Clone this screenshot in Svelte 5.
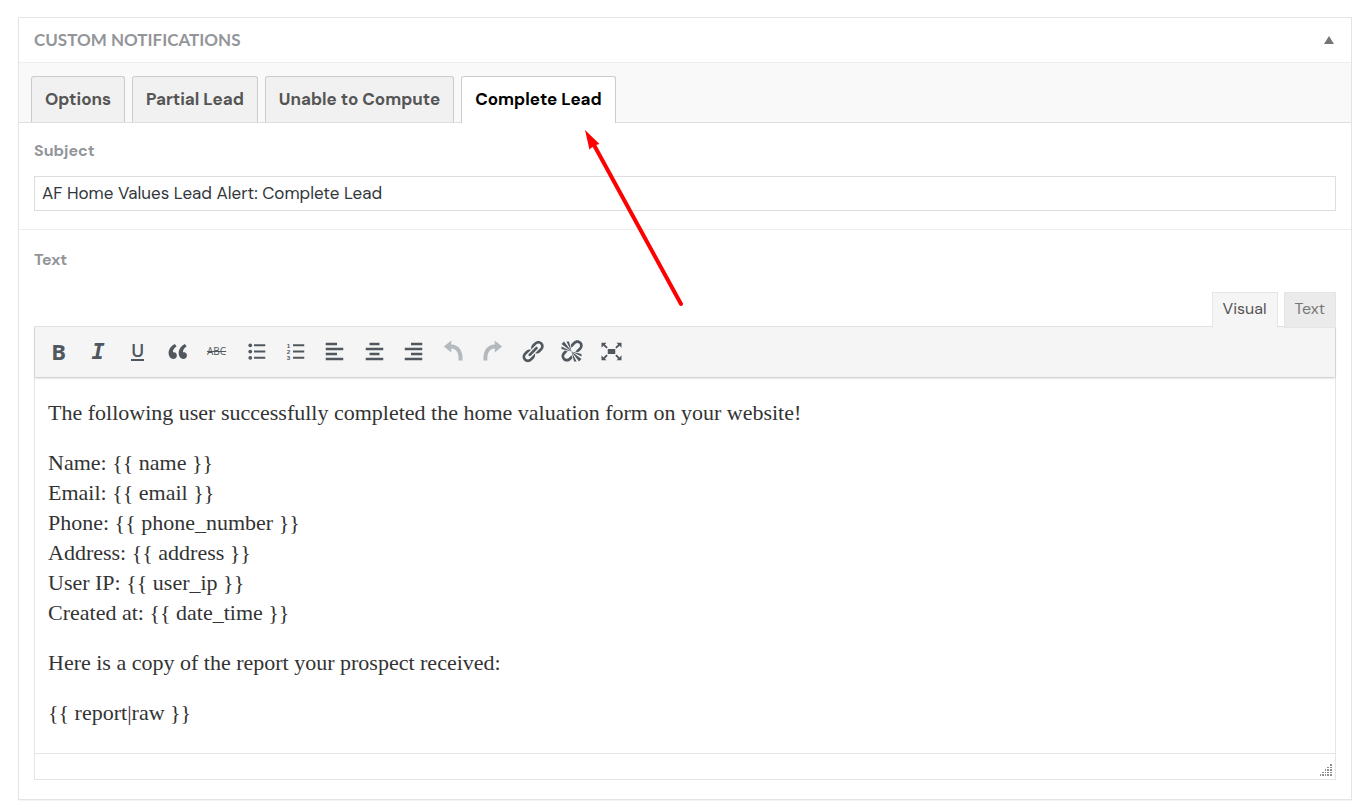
<script>
	const tabs = ['Options', 'Partial Lead', 'Unable to Compute', 'Complete Lead'];
	let activeTab = 'Complete Lead';
	let subject = 'AF Home Values Lead Alert: Complete Lead';
	let mode = 'Visual';
	let open = true;

	const paragraphs = [
		['The following user successfully completed the home valuation form on your website!'],
		[
			'Name: {{ name }}',
			'Email: {{ email }}',
			'Phone: {{ phone_number }}',
			'Address: {{ address }}',
			'User IP: {{ user_ip }}',
			'Created at: {{ date_time }}'
		],
		['Here is a copy of the report your prospect received:'],
		['{{ report|raw }}']
	];

	const icons = [
		{
			label: 'Align left',
			path: 'M3 3h9v2H3zM3 7h14v2H3zM3 11h9v2H3zM3 15h14v2H3z'
		},
		{
			label: 'Align center',
			path: 'M6 3h8v2H6zM3 7h14v2H3zM6 11h8v2H6zM3 15h14v2H3z'
		},
		{
			label: 'Align right',
			path: 'M8 3h9v2H8zM3 7h14v2H3zM8 11h9v2H8zM3 15h14v2H3z'
		},
		{
			label: 'Undo',
			disabled: true,
			path: 'M8.2 1.2v3.1c5.9.2 9.5 4.6 9 12.8l-3.2.1c.4-5.8-1.4-9.4-5.8-9.6v3.2L2.3 6z'
		},
		{
			label: 'Redo',
			disabled: true,
			path: 'M11.8 1.2v3.1c-5.9.2-9.5 4.6-9 12.8l3.2.1c-.4-5.8 1.4-9.4 5.8-9.6v3.2L17.7 6z'
		},
		{
			label: 'Insert link',
			path: 'M17.74 2.76c1.68 1.69 1.68 4.41 0 6.1l-1.53 1.52c-1.12 1.12-2.7 1.47-4.14 1.09l2.62-2.61.76-.77.76-.76c.84-.84.84-2.2 0-3.04-.84-.85-2.2-.85-3.04 0l-.77.76-3.38 3.38c-.37-1.44-.02-3.02 1.1-4.14l1.52-1.53c1.69-1.68 4.42-1.68 6.1 0zM8.59 13.43l5.34-5.34c.42-.42.42-1.1 0-1.52-.44-.43-1.13-.39-1.53 0l-5.33 5.34c-.42.42-.42 1.1 0 1.52.44.43 1.13.39 1.52 0zm-.76 2.29l4.14-4.15c.38 1.44.03 3.02-1.09 4.14l-1.52 1.53c-1.69 1.68-4.41 1.68-6.1 0-1.68-1.68-1.68-4.42 0-6.1l1.53-1.52c1.12-1.12 2.7-1.47 4.14-1.1l-4.14 4.15c-.85.84-.85 2.2 0 3.05.84.84 2.2.84 3.04 0z'
		},
		{
			label: 'Remove link',
			path: 'M17.74 2.26c1.68 1.69 1.68 4.41 0 6.1l-1.53 1.52c-.32.33-.69.58-1.08.77L13 10l1.69-1.64.76-.77.76-.76c.84-.84.84-2.2 0-3.04-.84-.85-2.2-.85-3.04 0l-.77.76-.76.76L10 7l-.65-2.14c.19-.38.44-.75.77-1.07l1.52-1.53c1.69-1.68 4.42-1.68 6.1 0zM2 4l8 6-6-8zm4-2l4 8-2-8H6zM2 6l8 4-8-2V6zm7.36 7.69L10 13l.74 2.35-1.38 1.39c-1.69 1.68-4.41 1.68-6.1 0-1.68-1.68-1.68-4.42 0-6.1l1.39-1.38L7 10l-.69.64-1.52 1.53c-.85.84-.85 2.2 0 3.04.84.85 2.2.85 3.04 0zM18 16l-8-6 6 8zm-4 2l-4-8 2 8h2zm4-4l-8-4 8 2v2z'
		},
		{
			label: 'Fullscreen',
			path: 'M7 8h6v4H7zM2 3h4L4.7 4.3 7 6.6 6 7.6 3.5 5.3 2 7zM18 3v4l-1.5-1.7L14 7.6l-1-1 2.3-2.3L14 3zM2 17v-4l1.5 1.7L6 12.4l1 1-2.3 2.3L6 17zM18 17h-4l1.3-1.3-2.3-2.3 1-1 2.5 2.3L18 13z'
		}
	];
</script>

<section class="panel">
	<header>
		<h2>Custom Notifications</h2>
		<button class="toggle" aria-label="Toggle panel" aria-expanded={open} on:click={() => (open = !open)}>
			<svg viewBox="0 0 10 8"><path d="M5 0l5 8H0z" /></svg>
		</button>
	</header>

	{#if open}
		<div class="tabs" role="tablist">
			{#each tabs as tab}
				<button role="tab" class="tab" class:active={tab === activeTab} aria-selected={tab === activeTab} on:click={() => (activeTab = tab)}>{tab}</button>
			{/each}
		</div>

		<div class="field">
			<label for="subject">Subject</label>
			<input id="subject" type="text" bind:value={subject} />
		</div>

		<div class="field text-field">
			<span class="label" id="text-label">Text</span>
			<div class="modes">
				{#each ['Visual', 'Text'] as name}
					<button class="mode" class:current={mode === name} on:click={() => (mode = name)}>{name}</button>
				{/each}
			</div>

			<div class="editor">
				<div class="toolbar">
					<div class="buttons">
						<button aria-label="Bold"><b>B</b></button>
						<button aria-label="Italic"><i>I</i></button>
						<button aria-label="Underline"><span class="underline">U</span></button>
						<button aria-label="Blockquote">
							<svg viewBox="0 0 20 20"><path d="M9.49 13.22c0-.74-.2-1.38-.61-1.9-.62-.78-1.83-.88-2.53-.72-.29-1.65 1.11-3.75 2.92-4.65L7.88 4c-2.73 1.3-5.42 4.28-4.96 8.05C3.21 14.43 4.59 16 6.54 16c.85 0 1.56-.25 2.12-.75s.83-1.18.83-2.03zm8.05 0c0-.74-.2-1.38-.61-1.9-.63-.78-1.83-.88-2.53-.72-.29-1.65 1.11-3.75 2.92-4.65L15.93 4c-2.73 1.3-5.41 4.28-4.95 8.05.29 2.38 1.66 3.95 3.61 3.95.85 0 1.56-.25 2.12-.75s.83-1.18.83-2.03z" /></svg>
						</button>
						<button aria-label="Strikethrough"><s>ABC</s></button>
						<button aria-label="Bulleted list">
							<svg viewBox="0 0 20 20">
								<circle cx="5" cy="5" r="1.5" /><circle cx="5" cy="10" r="1.5" /><circle cx="5" cy="15" r="1.5" />
								<path d="M8 4.2h9v1.6H8zM8 9.2h9v1.6H8zM8 14.2h9v1.6H8z" />
							</svg>
						</button>
						<button aria-label="Numbered list">
							<svg viewBox="0 0 20 20">
								<text x="3" y="7">1</text><text x="3" y="12">2</text><text x="3" y="17">3</text>
								<path d="M8 4.2h9v1.6H8zM8 9.2h9v1.6H8zM8 14.2h9v1.6H8z" />
							</svg>
						</button>
						{#each icons as icon}
							<button aria-label={icon.label} disabled={icon.disabled}>
								<svg viewBox="0 0 20 20"><path d={icon.path} /></svg>
							</button>
						{/each}
					</div>
				</div>

				<div class="content" contenteditable="true" role="textbox" aria-multiline="true" aria-labelledby="text-label" tabindex="0" spellcheck="false">
					{#each paragraphs as lines}
						<p>
							{#each lines as line, i}{#if i}<br />{/if}{line}{/each}
						</p>
					{/each}
				</div>

				<div class="statusbar">
					<svg viewBox="0 0 12 12">
						<path d="M10 0h2v2h-2zM7 3h2v1H7zM10 3h2v1h-2zM5 5h1v2H5zM7 5h2v2H7zM10 5h2v2h-2zM5 8h1v1H5zM7 8h2v1H7zM10 8h2v1h-2zM2 8h2v1H2zM0 10h1v2H0zM2 10h2v2H2zM5 10h1v2H5zM7 10h2v2H7zM10 10h2v2h-2z" />
					</svg>
				</div>
			</div>
		</div>

		<svg class="arrow" viewBox="0 0 100 178" aria-hidden="true">
			<path class="shaft" d="M96 174L9 15" />
			<path class="head" d="M0 0l14.5 14-3.5 1-5 3-1.500 1.800z" />
		</svg>
	{/if}
</section>

<style>
:global(body) {
	background: #fff;
}
* {
	box-sizing: border-box;
}
button,
input {
	font-family: inherit;
}
button {
	cursor: pointer;
}
.panel {
	position: relative;
	margin: 17px 16px 8px 18px;
	border: 1px solid #e2e4e7;
	box-shadow: 0 1px 1px rgba(0, 0, 0, 0.04);
	font-family: "DM Sans", Inter, "Open Sans", sans-serif;
	color: #32373c;
}
header {
	display: flex;
	align-items: center;
	justify-content: space-between;
	height: 45px;
	padding: 0 15px;
	border-bottom: 1px solid #eee;
}
h2 {
	margin: 0;
	font-family: Lato, sans-serif;
	font-size: 17px;
	font-weight: 700;
	line-height: 24px;
	text-transform: uppercase;
	color: #939599;
}
.toggle {
	display: flex;
	padding: 0;
	border: 0;
	background: none;
}
.toggle svg {
	width: 14px;
	height: 8px;
	fill: #72777c;
}
.tabs {
	display: flex;
	gap: 7px;
	padding: 13px 12px 0;
	border-bottom: 1px solid #dfdfdf;
	background: #f9f9f9;
}
.tab {
	height: 46px;
	padding: 0 13px 2px;
	border: 1px solid #ccc;
	border-bottom: 0;
	border-radius: 3px 3px 0 0;
	background: #f1f1f1;
	font-size: 17px;
	font-weight: 700;
	color: #555;
}
.tab.active {
	height: 47px;
	margin-bottom: -1px;
	background: #fff;
	color: #000;
}
.field {
	display: flex;
	flex-direction: column;
	padding: 16px 15px 18px;
	border-bottom: 1px solid #eee;
}
.text-field {
	padding: 18px 15px 19px;
	border-bottom: 0;
}
label,
.label {
	font-size: 16px;
	font-weight: 700;
	line-height: 24px;
	color: #939599;
}
input {
	height: 35px;
	margin-top: 13px;
	padding: 0 7px 2px;
	border: 1px solid #ddd;
	font-size: 17px;
	color: #32373c;
}
.modes {
	display: flex;
	justify-content: flex-end;
	gap: 6px;
	margin-top: 20px;
}
.mode {
	z-index: 1;
	height: 36px;
	margin-bottom: -2px;
	padding: 0 10px 3px;
	border: 1px solid #e5e5e5;
	background: #ebebeb;
	font-size: 16px;
	color: #777;
}
.mode.current {
	padding-bottom: 4px;
	border-bottom: 0;
	background: #f5f5f5;
	color: #555;
}
.editor {
	border: 1px solid #e5e5e5;
}
.toolbar {
	padding: 5px 4px 6px;
	background: #f5f5f5;
	box-shadow: 0 1px 2px rgba(0, 0, 0, 0.25);
}
.buttons {
	display: grid;
	grid-template-columns: repeat(15, 1fr);
	max-width: 592px;
}
.buttons button {
	display: flex;
	align-items: center;
	justify-content: center;
	height: 39px;
	padding: 0;
	border: 0;
	background: none;
	color: #50575e;
}
.buttons button:disabled {
	color: #b4b9be;
}
.buttons svg {
	width: 25px;
	height: 25px;
	fill: currentColor;
}
.buttons text {
	font: 700 5px "Liberation Sans", sans-serif;
}
b {
	padding-bottom: 2px;
	font: 700 22px/24px "Open Sans", sans-serif;
}
i {
	font: italic 700 22px/24px "DejaVu Sans Mono", monospace;
}
.underline {
	border-bottom: 2px solid;
	font: 600 18px/17px "Open Sans", sans-serif;
}
s {
	padding-bottom: 2px;
	font: 400 10px/12px "Open Sans", sans-serif;
}
.content {
	padding: 21px 13px 20px;
	font-family: Georgia, "Liberation Serif", serif;
	font-size: 22px;
	line-height: 30px;
	color: #333;
	outline: 0;
}
.content p {
	margin: 0 0 20px;
}
.content p:last-child {
	margin-bottom: 5px;
}
.statusbar {
	display: flex;
	align-items: flex-end;
	justify-content: flex-end;
	height: 26px;
	padding: 3px;
	border-top: 1px solid #e5e5e5;
}
.statusbar svg {
	width: 12px;
	height: 12px;
	fill: #8c8f94;
}
.arrow {
	position: absolute;
	top: 112px;
	left: 566px;
	width: 100px;
	height: 178px;
	pointer-events: none;
}
.shaft {
	fill: none;
	stroke: #f00;
	stroke-width: 4;
	stroke-linecap: round;
}
.head {
	fill: #f00;
}
</style>
